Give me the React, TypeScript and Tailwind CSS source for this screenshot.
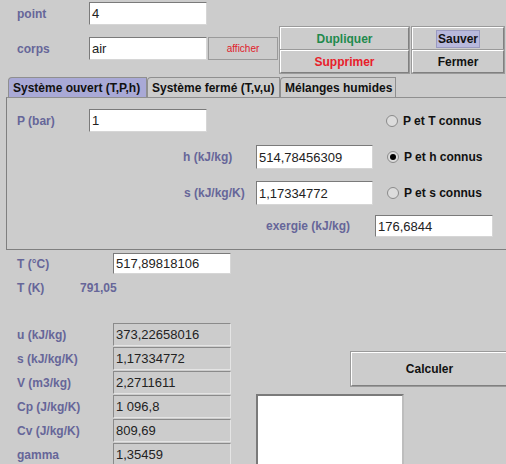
import React from "react";

const label = "font-bold text-[12px] text-[#666699] leading-none";
const field =
  "bg-white border border-t-[#7a7a7a] border-l-[#7a7a7a] border-b-[#d6d6d6] border-r-[#d6d6d6] text-[13px] text-[#222] pl-[2px] flex items-center leading-none";
const button =
  "bg-[#cccccc] border border-t-white border-l-white border-b-[#808080] border-r-[#808080] outline outline-1 outline-[#9a9a9a] flex items-center justify-center font-bold text-[12px] leading-none";

function Radio({ checked, text }: { checked?: boolean; text: string }) {
  return (
    <div className="flex items-center">
      <span className="w-[12px] h-[12px] rounded-full border border-[#8a8a8a] bg-[#dcdcdc] flex items-center justify-center ml-[1px]">
        {checked && <span className="w-[6px] h-[6px] rounded-full bg-black" />}
      </span>
      <span className="ml-[5px] font-bold text-[12px] text-[#111] leading-none">{text}</span>
    </div>
  );
}

function Tab({ text, active, w }: { text: string; active?: boolean; w: string }) {
  return (
    <div
      className={`${w} h-[20px] flex items-center pl-[4px] border border-b-0 border-[#8f8f8f] rounded-tl-[4px] font-bold text-[12px] text-[#111] leading-none ${
        active ? "bg-[#a9a9d6]" : "bg-[#cccccc]"
      }`}
    >
      {text}
    </div>
  );
}

const outputs: [string, string][] = [
  ["u (kJ/kg)", "373,22658016"],
  ["s (kJ/kg/K)", "1,17334772"],
  ["V (m3/kg)", "2,2711611"],
  ["Cp (J/kg/K)", "1 096,8"],
  ["Cv (J/kg/K)", "809,69"],
  ["gamma", "1,35459"],
];

export default function App() {
  return (
    <div className="w-[506px] h-[464px] overflow-hidden bg-[#cccccc] font-['Liberation_Sans',Arial,sans-serif]">
      {/* header */}
      <div className="flex h-[77px]">
        <div className="w-[280px]">
          <div className="flex items-center h-[23px] mt-[2px]">
            <span className={`${label} w-[89px] pl-[17px]`}>point</span>
            <div className={`${field} w-[118px] h-[23px]`}>4</div>
          </div>
          <div className="flex items-center h-[23px] mt-[12px]">
            <span className={`${label} w-[89px] pl-[17px]`}>corps</span>
            <div className={`${field} w-[118px] h-[23px]`}>air</div>
            <div className="ml-[1px] w-[70px] h-[23px] border border-[#9a9a9a] flex items-center justify-center text-[10px] text-[#e0202a] leading-none">
              afficher
            </div>
          </div>
        </div>
        <div className="mt-[27px] grid grid-cols-[129px_92px] grid-rows-[23px_23px] gap-x-[3px]">
          <div className={`${button} text-[#1f8a4c]`}>Dupliquer</div>
          <div className={`${button} text-[#111]`}>
            <span className="bg-[#b8b8dc] outline outline-1 outline-[#9a9ac0] px-[1px] py-[2px]">Sauver</span>
          </div>
          <div className={`${button} text-[#e8202a]`}>Supprimer</div>
          <div className={`${button} text-[#111]`}>Fermer</div>
        </div>
      </div>

      {/* tabs */}
      <div className="flex h-[20px] pl-[8px]">
        <Tab text="Système ouvert (T,P,h)" active w="w-[139px]" />
        <Tab text="Système fermé (T,v,u)" w="w-[133px]" />
        <Tab text="Mélanges humides" w="w-[116px]" />
      </div>

      {/* panel */}
      <div className="ml-[6px] h-[153px] border border-r-0 border-[#7f7f7f] border-t-[#8f8f8f]">
        <div className="flex items-center h-[23px] mt-[11px]">
          <span className={`${label} w-[82px] pl-[10px]`}>P (bar)</span>
          <div className={`${field} w-[118px] h-[23px]`}>1</div>
          <div className="ml-[178px]">
            <Radio text="P et T connus" />
          </div>
        </div>
        <div className="flex items-center h-[24px] mt-[13px]">
          <span className={`${label} w-[73px] ml-[176px]`}>h (kJ/kg)</span>
          <div className={`${field} w-[117px] h-[24px]`}>514,78456309</div>
          <div className="ml-[13px]">
            <Radio checked text="P et h connus" />
          </div>
        </div>
        <div className="flex items-center h-[24px] mt-[12px]">
          <span className={`${label} w-[72px] ml-[177px]`}>s (kJ/kg/K)</span>
          <div className={`${field} w-[117px] h-[24px]`}>1,17334772</div>
          <div className="ml-[13px]">
            <Radio text="P et s connus" />
          </div>
        </div>
        <div className="flex items-center h-[22px] mt-[10px]">
          <span className={`${label} w-[109px] ml-[259px]`}>exergie (kJ/kg)</span>
          <div className={`${field} w-[118px] h-[22px]`}>176,6844</div>
        </div>
      </div>

      {/* temperatures */}
      <div className="flex items-center h-[21px] mt-[3px]">
        <span className={`${label} w-[113px] pl-[17px]`}>T (°C)</span>
        <div className={`${field} w-[118px] h-[21px]`}>517,89818106</div>
      </div>
      <div className="flex items-center h-[20px] mt-[4px]">
        <span className={`${label} w-[80px] pl-[17px]`}>T (K)</span>
        <span className={label}>791,05</span>
      </div>

      {/* results */}
      <div className="flex mt-[25px]">
        <div className="w-[231px]">
          {outputs.map(([k, v]) => (
            <div key={k} className="flex items-center h-[23px] mb-[1px]">
              <span className={`${label} w-[113px] pl-[17px]`}>{k}</span>
              <div className="w-[118px] h-[23px] border border-t-[#8a8a8a] border-l-[#8a8a8a] border-b-[#e4e4e4] border-r-[#e4e4e4] flex items-center pl-[2px] text-[13px] text-[#222] leading-none">
                {v}
              </div>
            </div>
          ))}
        </div>
        <div>
          <div className={`${button} ml-[120px] mt-[29px] w-[157px] h-[34px] text-[#111]`}>Calculer</div>
          <div className="ml-[25px] mt-[8px] w-[148px] h-[80px] bg-white border-2 border-[#7a7a7a] border-b-[#bdbdbd] border-r-[#bdbdbd]" />
        </div>
      </div>
    </div>
  );
}
